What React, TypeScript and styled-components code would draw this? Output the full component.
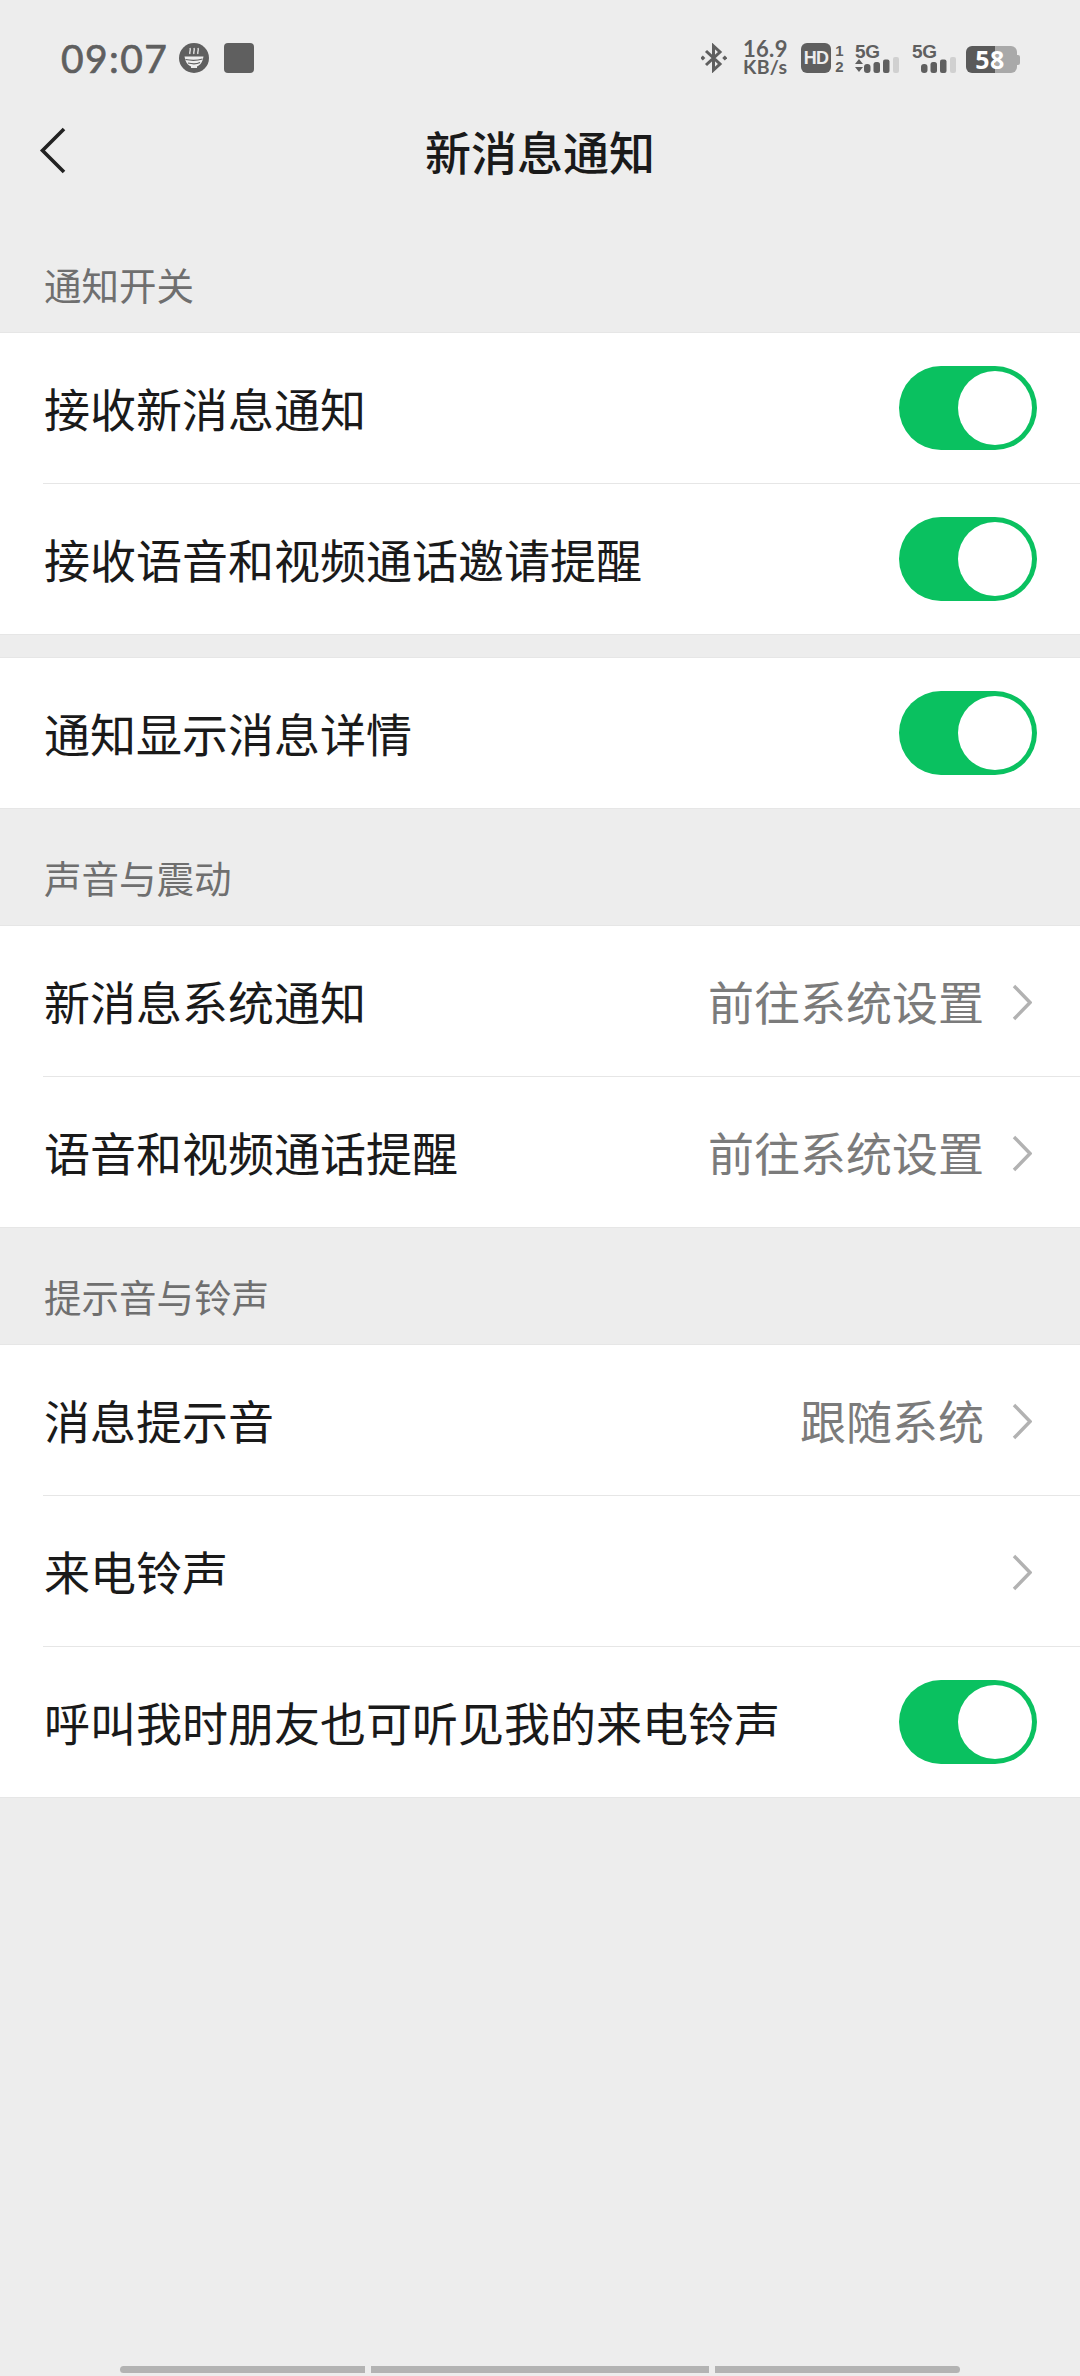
import React from "react";
import styled, { createGlobalStyle } from "styled-components";

const Global = createGlobalStyle`
  html, body { margin: 0; padding: 0; background: #ededed; }
  body { font-family: "Noto Sans CJK SC", "Noto Sans", sans-serif; }
`;

const Page = styled.div`
  width: 1080px;
  height: 2376px;
  background: #ededed;
  display: flex;
  flex-direction: column;
  overflow: hidden;
`;

const StatusBar = styled.div`
  height: 76px;
  padding: 0 60px 0 61px;
  box-sizing: border-box;
  display: flex;
  align-items: flex-start;
  justify-content: space-between;
  color: #5f5f5f;
`;

const StatusLeft = styled.div`
  display: flex;
  align-items: center;
  height: 30px;
  margin-top: 43px;
`;

const Clock = styled.span`
  font-family: Lato, sans-serif;
  font-size: 39px;
  line-height: 30px;
  font-weight: 400;
  -webkit-text-stroke: 0.7px #5f5f5f;
  letter-spacing: 1.4px;
  width: 118px;
`;

const AppSquare = styled.span`
  width: 30px;
  height: 30px;
  margin-left: 15px;
  border-radius: 4px;
  background: #5f5f5f;
`;

const StatusRight = styled.div`
  display: flex;
  align-items: flex-start;
  height: 34px;
  margin-top: 41px;
`;

const Speed = styled.div`
  width: 45px;
  margin: -1px 0 0 16px;
  display: flex;
  flex-direction: column;
  font-family: Lato, sans-serif;
`;

const SpeedValue = styled.span`
  font-size: 22px;
  line-height: 17px;
  font-weight: 700;
  letter-spacing: 0.3px;
  white-space: nowrap;
`;

const SpeedUnit = styled.span`
  font-size: 19.5px;
  line-height: 20px;
  font-weight: 700;
  letter-spacing: 0.3px;
  white-space: nowrap;
`;

const HdBox = styled.span`
  width: 30px;
  height: 30px;
  margin: 2px 0 0 13px;
  border-radius: 6px;
  background: #5f5f5f;
  color: #ededed;
  font: 900 18px/30px "Liberation Sans", sans-serif;
  letter-spacing: -0.8px;
  text-align: center;
`;

const SimDigits = styled.div`
  width: 13px;
  margin: 2px 0 0 2px;
  display: flex;
  flex-direction: column;
  font: 700 15px/16px "Liberation Sans", sans-serif;
  text-align: center;
`;

const Signal = styled.div<{ $gap: number }>`
  display: flex;
  flex-direction: column;
  margin-left: ${(p) => p.$gap}px;
  height: 32px;
`;

const NetLabel = styled.span`
  font: 700 19px/17px "Liberation Sans", sans-serif;
  height: 14px;
  margin-top: 2px;
  letter-spacing: -0.4px;
`;

const Battery = styled.div`
  width: 54px;
  height: 27px;
  margin: 5px 0 0 10px;
  display: flex;
  align-items: center;
`;

const BatteryBody = styled.span`
  width: 51px;
  height: 27px;
  padding-right: 3px;
  box-sizing: border-box;
  border-radius: 6px;
  background: linear-gradient(90deg, #5a5a5a 0 29px, #a9a9a9 29px);
  color: #fff;
  font: 700 25px/27px "Noto Sans", sans-serif;
  text-align: center;
  letter-spacing: 0.5px;
`;

const BatteryCap = styled.span`
  width: 3px;
  height: 10px;
  border-radius: 0 2px 2px 0;
  background: #a9a9a9;
`;

const NavBar = styled.header`
  height: 154px;
  box-sizing: border-box;
  padding-bottom: 6px;
  position: relative;
  display: flex;
  align-items: center;
  justify-content: center;
`;

const BackIcon = styled.svg`
  position: absolute;
  left: 38px;
  top: 50px;
`;

const Title = styled.h1`
  margin: 0;
  font-size: 46px;
  font-weight: 500;
  color: #1a1a1a;
  line-height: 60px;
`;

const SectionHeader = styled.div<{ $height: number }>`
  height: ${(p) => p.$height}px;
  box-sizing: border-box;
  padding: 0 44px 26px;
  display: flex;
  align-items: flex-end;
  font-size: 37.5px;
  line-height: 44px;
  color: #6f6f6f;
`;

const Group = styled.section<{ $gap?: number }>`
  margin-top: ${(p) => p.$gap ?? 0}px;
  background: #fff;
  border-top: 1px solid #e6e6e6;
  border-bottom: 1px solid #e6e6e6;
  display: flex;
  flex-direction: column;
`;

const Row = styled.div`
  height: 150px;
  padding: 0 43px 0 44px;
  display: flex;
  align-items: center;
  & + & {
    position: relative;
    height: 151px;
    padding-top: 1px;
    box-sizing: border-box;
  }
  & + &::before {
    content: "";
    position: absolute;
    top: 0;
    left: 43px;
    right: 0;
    height: 1px;
    background: #e6e6e6;
  }
`;

const RowLabel = styled.span`
  flex: 1;
  font-size: 46px;
  line-height: 60px;
  padding-bottom: 3px;
  color: #1a1a1a;
  white-space: nowrap;
`;

const RowValue = styled.span`
  font-size: 46px;
  line-height: 60px;
  padding-bottom: 3px;
  color: #7b7b7b;
  margin-right: 28px;
  white-space: nowrap;
`;

const ChevronIcon = styled.svg`
  display: block;
  margin: 2px 5px 0 0;
`;

const Toggle = styled.span`
  width: 138px;
  height: 84px;
  box-sizing: border-box;
  padding: 5px;
  border-radius: 42px;
  background: #0ac160;
  display: flex;
  justify-content: flex-end;
`;

const Knob = styled.span`
  width: 74px;
  height: 74px;
  border-radius: 50%;
  background: #fff;
`;

const Spacer = styled.div`
  flex: 1;
`;

const GestureBar = styled.div`
  height: 10px;
  padding: 0 120px;
  display: flex;
  gap: 6px;
`;

const GestureSeg = styled.span<{ $grow: number }>`
  flex: ${(p) => p.$grow} 0 0;
  height: 7px;
  background: #b3b3b3;
  &:first-child { border-radius: 4px 0 0 4px; }
  &:last-child { border-radius: 0 4px 4px 0; }
`;

const Chevron = () => (
  <ChevronIcon width="20" height="37" viewBox="0 0 20 37" fill="none">
    <path d="M2 2 L18 18.5 L2 35" stroke="#b2b2b2" strokeWidth="3.4" />
  </ChevronIcon>
);

const Switch = () => (
  <Toggle>
    <Knob />
  </Toggle>
);

const BowlIcon = () => (
  <svg width="30" height="30" viewBox="0 0 30 30">
    <circle cx="15" cy="15" r="15" fill="#5f5f5f" />
    <path d="M11 11c-1-2 1-3 0-6M15 11c-1-2 1-3 0-6M19 11c-1-2 1-3 0-6" stroke="#ededed" strokeWidth="1.3" fill="none" />
    <path d="M5.5 13.5h19l-1 4c-1 3-3 5-5.5 6v1.5h-6v-1.5c-2.5-1-4.5-3-5.5-6z" fill="#ededed" />
    <path d="M6.5 16.5c5 1 12 1 17-.5M9 20c4 1 9 1 12-.5" stroke="#5f5f5f" strokeWidth="1.2" fill="none" />
  </svg>
);

const BluetoothIcon = () => (
  <svg width="26" height="30" viewBox="0 0 26 30" style={{ marginTop: 2 }} fill="none">
    <path d="M5 8 L19 21 L12.5 27 V3 L19 9 L5 22" stroke="#5f5f5f" strokeWidth="3" />
    <rect x="0" y="13.2" width="3.6" height="3.6" transform="rotate(45 1.8 15)" fill="#5f5f5f" />
    <rect x="22" y="13.2" width="3.6" height="3.6" transform="rotate(45 23.8 15)" fill="#5f5f5f" />
  </svg>
);

const Bars = ({ arrows }: { arrows?: boolean }) => (
  <svg width="44" height="16" viewBox="0 0 44 16">
    {arrows && <path d="M0 7 L4 2 L8 7z M0 10 L8 10 L4 15z" fill="#5f5f5f" />}
    <rect x="9" y="7" width="6.5" height="9" rx="3" fill="#5f5f5f" />
    <rect x="18.5" y="5" width="6.5" height="11" rx="2.5" fill="#5f5f5f" />
    <rect x="28" y="2.5" width="6.5" height="13.5" rx="2" fill="#5f5f5f" />
    <rect x="38" y="0" width="6" height="16" rx="2" fill="#d0d0d0" />
  </svg>
);

export default function App() {
  return (
    <Page>
      <Global />
      <StatusBar>
        <StatusLeft>
          <Clock>09:07</Clock>
          <BowlIcon />
          <AppSquare />
        </StatusLeft>
        <StatusRight>
          <BluetoothIcon />
          <Speed>
            <SpeedValue>16.9</SpeedValue>
            <SpeedUnit>KB/s</SpeedUnit>
          </Speed>
          <HdBox>HD</HdBox>
          <SimDigits>
            <span>1</span>
            <span>2</span>
          </SimDigits>
          <Signal $gap={9}>
            <NetLabel>5G</NetLabel>
            <Bars arrows />
          </Signal>
          <Signal $gap={13}>
            <NetLabel>5G</NetLabel>
            <Bars />
          </Signal>
          <Battery>
            <BatteryBody>58</BatteryBody>
            <BatteryCap />
          </Battery>
        </StatusRight>
      </StatusBar>

      <NavBar>
        <BackIcon width="30" height="50" viewBox="0 0 30 50" fill="none">
          <path d="M26 3 L4.5 24.5 L26 46" stroke="#222" strokeWidth="3.6" />
        </BackIcon>
        <Title>新消息通知</Title>
      </NavBar>

      <SectionHeader $height={102}>通知开关</SectionHeader>
      <Group>
        <Row>
          <RowLabel>接收新消息通知</RowLabel>
          <Switch />
        </Row>
        <Row>
          <RowLabel>接收语音和视频通话邀请提醒</RowLabel>
          <Switch />
        </Row>
      </Group>
      <Group $gap={22}>
        <Row>
          <RowLabel>通知显示消息详情</RowLabel>
          <Switch />
        </Row>
      </Group>

      <SectionHeader $height={116}>声音与震动</SectionHeader>
      <Group>
        <Row>
          <RowLabel>新消息系统通知</RowLabel>
          <RowValue>前往系统设置</RowValue>
          <Chevron />
        </Row>
        <Row>
          <RowLabel>语音和视频通话提醒</RowLabel>
          <RowValue>前往系统设置</RowValue>
          <Chevron />
        </Row>
      </Group>

      <SectionHeader $height={116}>提示音与铃声</SectionHeader>
      <Group>
        <Row>
          <RowLabel>消息提示音</RowLabel>
          <RowValue>跟随系统</RowValue>
          <Chevron />
        </Row>
        <Row>
          <RowLabel>来电铃声</RowLabel>
          <Chevron />
        </Row>
        <Row>
          <RowLabel>呼叫我时朋友也可听见我的来电铃声</RowLabel>
          <Switch />
        </Row>
      </Group>

      <Spacer />
      <GestureBar>
        <GestureSeg $grow={245} />
        <GestureSeg $grow={338} />
        <GestureSeg $grow={245} />
      </GestureBar>
    </Page>
  );
}
